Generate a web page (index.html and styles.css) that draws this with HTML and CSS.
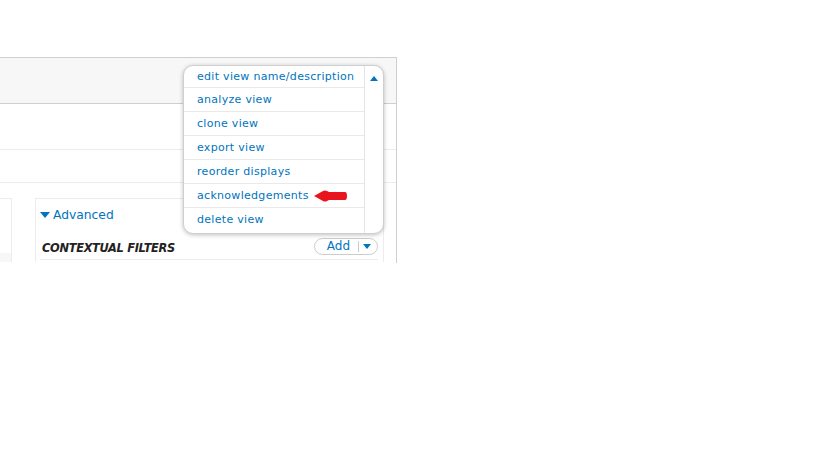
FILE: index.html
```html
<!DOCTYPE html>
<html lang="en">
<head>
    <meta charset="UTF-8">
    <title>Views - Edit</title>
    <link rel="stylesheet" href="styles.css">
</head>
<body>
    <div class="page">
        <div class="views-panel">
            <div class="panel-head"></div>
            <div class="panel-row tall"></div>
            <div class="panel-row short"></div>

            <div class="columns">
                <div class="col-left"></div>
                <div class="col-right">
                    <a class="advanced-toggle"><span class="tri-down"></span>Advanced</a>
                    <div class="section-head">
                        <h3>Contextual filters</h3>
                        <div class="add-btn">
                            <span class="add-label">Add</span>
                            <span class="add-arrow"><span class="tri-down small"></span></span>
                        </div>
                    </div>
                </div>
            </div>

            <!-- operations dropdown -->
            <div class="ops-menu">
                <ul class="ops-list">
                    <li><a>edit view name/description</a></li>
                    <li><a>analyze view</a></li>
                    <li><a>clone view</a></li>
                    <li><a>export view</a></li>
                    <li><a>reorder displays</a></li>
                    <li>
                        <a>acknowledgements</a>
                        <svg class="red-arrow" width="33" height="12" viewBox="0 0 33 12">
                            <path d="M0 6 L9 1 Q11 0 13 1 L15 2 L31 2 Q33 2 33 6 Q33 10 31 10 L15 10 L13 11 Q11 12 9 11 Z" fill="#e8141e"/>
                        </svg>
                    </li>
                    <li><a>delete view</a></li>
                </ul>
                <div class="ops-toggle"><span class="tri-up"></span></div>
            </div>
        </div>
    </div>
</body>
</html>
```

FILE: styles.css
```css
body {
    margin: 0;
    background: #fff;
    font-family: "DejaVu Sans", Verdana, sans-serif;
}

.page {
    padding-top: 57px;
}

.views-panel {
    position: relative;
    width: 396px;
    height: 205px;
    border-top: 1px solid #cfcfcf;
    border-right: 1px solid #cfcfcf;
}

.panel-head {
    height: 45px;
    background: #f7f7f7;
    border-bottom: 1px solid #cfcfcf;
}

.panel-row {
    border-bottom: 1px solid #ececec;
}

.panel-row.tall {
    height: 45px;
}

.panel-row.short {
    height: 32px;
}

.columns {
    display: flex;
    gap: 23px;
    margin-top: 15px;
    height: 64px;
}

.col-left {
    width: 11px;
    border-right: 1px solid #ececec;
    border-top: 1px solid #ececec;
    background: linear-gradient(#fff 54px, #f7f7f7 54px);
}

.col-right {
    box-sizing: border-box;
    width: 349px;
    border: 1px solid #ececec;
    border-bottom: 0;
    padding: 8px 5px 0 4px;
}

.advanced-toggle {
    display: flex;
    align-items: center;
    gap: 3px;
    color: #0074bd;
    font-size: 12.3px;
    line-height: 16px;
}

.tri-down {
    display: inline-block;
    width: 0;
    height: 0;
    border-left: 5px solid transparent;
    border-right: 5px solid transparent;
    border-top: 6px solid #0074bd;
}

.tri-down.small {
    border-left-width: 4px;
    border-right-width: 4px;
    border-top-width: 5px;
}

.section-head {
    display: flex;
    justify-content: space-between;
    align-items: center;
    margin-top: 15px;
    padding-left: 2px;
    padding-bottom: 4px;
    border-bottom: 1px solid #ececec;
}

.section-head h3 {
    margin: 0;
    font-size: 11.4px;
    font-style: italic;
    font-weight: bold;
    text-transform: uppercase;
    color: #222;
    letter-spacing: -0.3px;
    position: relative;
    top: 1px;
}

.add-btn {
    display: flex;
    align-items: center;
    height: 15px;
    border: 1px solid #ccc;
    border-radius: 9px;
    background: #fff;
    font-size: 12px;
    color: #0074bd;
}

.add-label {
    padding: 0 8px 0 12px;
    line-height: 15px;
}

.add-arrow {
    display: flex;
    align-items: center;
    height: 11px;
    padding: 0 6px 0 4px;
    border-left: 1px solid #ccc;
}

.ops-menu {
    position: absolute;
    top: 7px;
    left: 183px;
    width: 199px;
    height: 167px;
    display: flex;
    border: 1px solid #cfcfcf;
    border-radius: 10px;
    background: #fff;
    box-shadow: 0 1px 4px rgba(0, 0, 0, 0.25);
    overflow: hidden;
}

.ops-list {
    list-style: none;
    margin: 0;
    padding: 0;
    width: 180px;
    border-right: 1px solid #e4e4e4;
}

.ops-list li {
    display: flex;
    align-items: center;
    gap: 4px;
    height: 23px;
    padding-left: 13px;
    border-bottom: 1px solid #e9e9e9;
    font-size: 11px;
    letter-spacing: 0.3px;
    color: #0074bd;
}

.ops-list li:first-child {
    height: 21px;
}

.ops-list li:last-child {
    border-bottom: 0;
}

.red-arrow {
    margin-left: 1px;
}

.ops-toggle {
    flex: 1;
    display: flex;
    justify-content: center;
    padding-top: 10px;
}

.tri-up {
    width: 0;
    height: 0;
    border-left: 4px solid transparent;
    border-right: 4px solid transparent;
    border-bottom: 5px solid #0074bd;
}
```
